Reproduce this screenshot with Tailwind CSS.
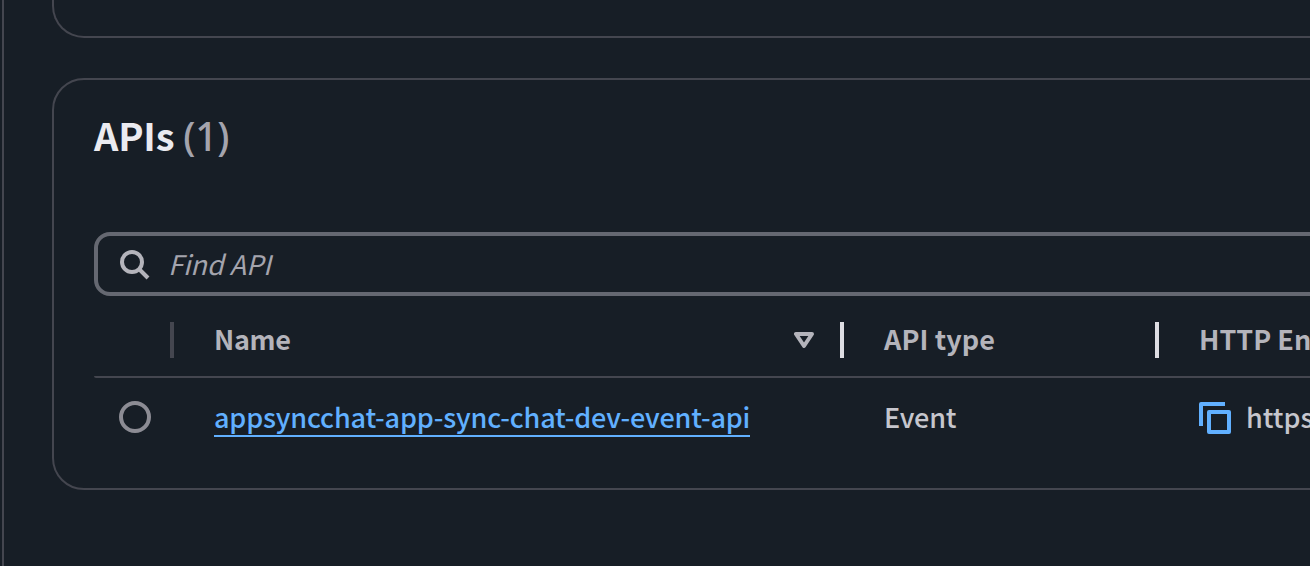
<!DOCTYPE html>
<html lang="en">
<head>
<meta charset="utf-8">
<title>APIs</title>
<script src="https://cdn.jsdelivr.net/npm/@tailwindcss/browser@4"></script>
</head>
<body class="bg-[#171e26]">
<div class="flex h-[566px] w-[1310px] overflow-hidden bg-[#171e26] pl-0.5 font-['Noto_Sans_CJK_SC','Noto_Sans',sans-serif] text-[27px] leading-10 whitespace-nowrap text-[#c6c6cd]">
  <main class="w-[1400px] shrink-0 border-l-2 border-[#44464f] pl-12">
    <section class="h-[38px] rounded-b-[32px] border-2 border-t-0 border-[#44464f]"></section>
    <section class="mt-10 flex h-[412px] flex-col rounded-[32px] border-2 border-[#44464f] pl-10">
      <h2 class="flex h-[152px] items-baseline gap-[9px] pt-[30px] text-[38px] leading-[50px] font-bold tracking-[-0.2px] text-[#ebebf0]">APIs<span class="font-['Noto_Sans',sans-serif] text-[39px] font-medium text-[#a4a4ad]">(1)</span></h2>
      <div class="flex h-16 items-center rounded-2xl border-4 border-[#656871] pl-5">
        <svg class="h-8 w-8" viewBox="0 0 32 32" fill="none" stroke="#b4b4bb" stroke-width="4"><circle cx="14" cy="14" r="10"/><path d="M20.5 20.5L30 30"/></svg>
        <span class="pl-[18px] text-[#a4a4ad] italic">Find API</span>
      </div>
      <div class="flex h-[82px] items-center rounded-bl-[2px] border-b-2 border-[#44464f] font-bold text-[#b4b4bb]">
        <div class="flex w-[80px] shrink-0 justify-end pt-2"><span class="h-9 w-1 bg-[#44464f]"></span></div>
        <div class="flex w-[670px] shrink-0 items-center pt-2 pl-10">
          <span class="pb-0.5 tracking-[-0.3px]">Name</span>
          <svg class="mr-[26px] ml-auto h-5 w-5" viewBox="0 0 20 20" fill="none" stroke="#b4b4bb" stroke-width="4" stroke-linejoin="round"><path d="M2 4h16l-8 12z"/></svg>
          <span class="h-9 w-1 bg-[#dedee3]"></span>
        </div>
        <div class="flex w-[315px] shrink-0 items-center justify-between pt-2 pl-10">
          <span class="pb-0.5 tracking-[0.1px]">API type</span><span class="h-9 w-1 bg-[#dedee3]"></span>
        </div>
        <div class="pt-1.5 pl-10">HTTP En</div>
      </div>
      <div class="flex h-20 items-center">
        <div class="w-[120px] shrink-0 pb-0.5 pl-[25px]"><div class="h-8 w-8 rounded-full border-4 border-[#8c8c94]"></div></div>
        <div class="flex w-[670px] shrink-0"><a class="block h-[38px] border-b-2 border-[#61b0ff] leading-[35px] font-medium tracking-[-0.16px] text-[#61b0ff]">appsyncchat-app-sync-chat-dev-event-api</a></div>
        <div class="w-[315px] shrink-0 pb-0.5 font-medium tracking-[-0.2px]">Event</div>
        <svg class="h-8 w-8" viewBox="0 0 32 32" fill="none" stroke="#61b0ff" stroke-width="4" stroke-linejoin="round"><path d="M2 24V2h24"/><path d="M10 10h20v20H10z"/></svg>
        <span class="pb-0.5 pl-[15px] font-medium">https</span>
      </div>
    </section>
  </main>
</div>
</body>
</html>
